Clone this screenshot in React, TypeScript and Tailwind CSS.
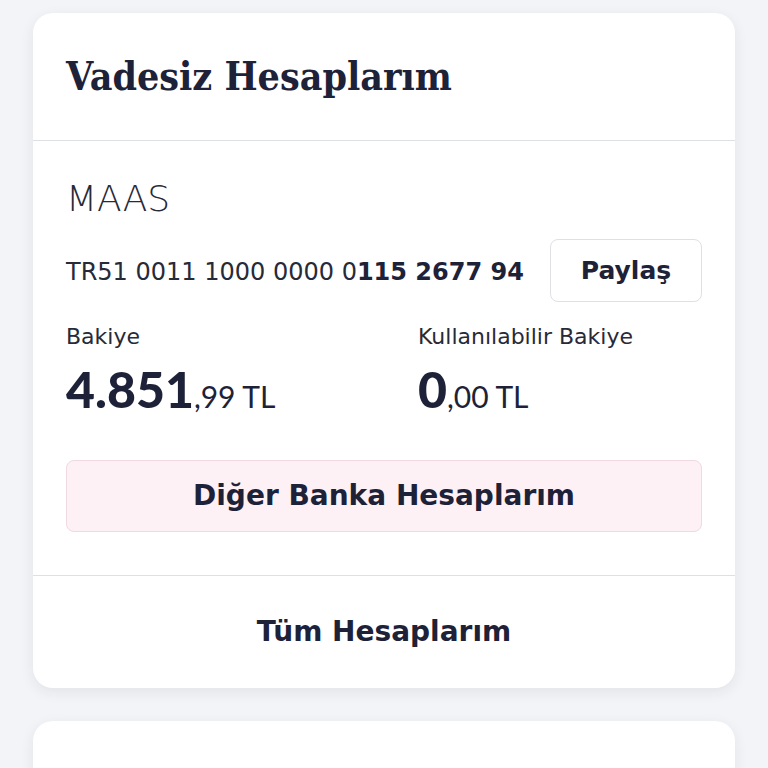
export default function App() {
  const sans = { fontFamily: '"DejaVu Sans", "Noto Sans", sans-serif' };
  const lato = { fontFamily: 'Lato, "Noto Sans", sans-serif' };
  return (
    <div className="min-h-screen bg-[#f3f4f7] pt-[13px] px-[33px] pb-6" style={sans}>
      <div className="rounded-[20px] bg-white shadow-[0_4px_14px_rgba(30,34,60,0.08)]">
        <div className="h-[128px] flex items-center px-[33px] border-b border-[#dfe0e6]">
          <h1
            className="text-[39px] font-bold text-[#1e2238]"
            style={{ fontFamily: '"DejaVu Serif Condensed", "DejaVu Serif", serif' }}
          >
            Vadesiz Hesaplarım
          </h1>
        </div>

        <div className="px-[33px] pt-[38px] pb-[43px] border-b border-[#dfe0e6]">
          <div className="text-[36px] leading-[40px] text-[#272a38] font-extralight">MAAS</div>

          <div className="mt-[20px] flex items-center justify-between">
            <div className="text-[24px] leading-[32px] pt-[3px] text-[#272a38]">
              TR51 0011 1000 0000 0<span className="font-bold text-[#1e2238]">115 2677 94</span>
            </div>
            <button className="w-[152px] h-[63px] rounded-[8px] border border-[#dfe0e6] bg-white text-[25px] font-bold text-[#1e2238]">
              Paylaş
            </button>
          </div>

          <div className="mt-[21px] grid grid-cols-2">
            <div>
              <div className="text-[22px] leading-[28px] text-[#272a38]">Bakiye</div>
              <div className="mt-[10px] flex items-baseline text-[#1e2238]" style={lato}>
                <span className="text-[50px] font-black leading-[56px]">4.851</span>
                <span className="text-[30px] leading-[56px]">,99 TL</span>
              </div>
            </div>
            <div className="pl-[34px]">
              <div className="text-[22px] leading-[28px] text-[#272a38]">Kullanılabilir Bakiye</div>
              <div className="mt-[10px] flex items-baseline text-[#1e2238]" style={lato}>
                <span className="text-[50px] font-black leading-[56px]">0</span>
                <span className="text-[30px] leading-[56px]">,00 TL</span>
              </div>
            </div>
          </div>

          <button className="mt-[36px] w-full h-[72px] rounded-[8px] border border-[#f0d9e1] bg-[#fdf1f5] text-[28px] font-bold text-[#1e2238]">
            Diğer Banka Hesaplarım
          </button>
        </div>

        <div className="h-[112px] flex items-center justify-center text-[28px] font-bold text-[#1e2238]">
          Tüm Hesaplarım
        </div>
      </div>

      <div className="mt-[33px] h-[80px] rounded-[20px] bg-white shadow-[0_4px_14px_rgba(30,34,60,0.08)]" />
    </div>
  );
}
